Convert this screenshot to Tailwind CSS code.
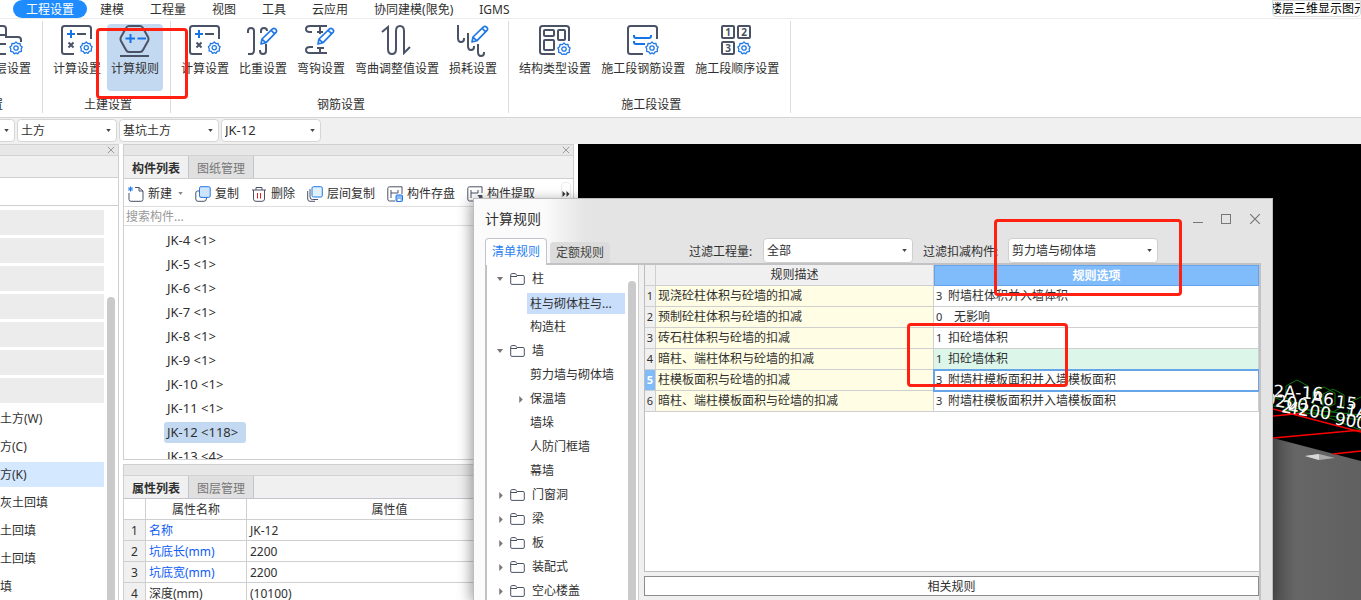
<!DOCTYPE html>
<html lang="zh-CN">
<head>
<meta charset="utf-8">
<title>计算规则</title>
<script src="https://cdn.jsdelivr.net/npm/@tailwindcss/browser@4"></script>
</head>
<body class="relative flex h-screen flex-col overflow-hidden bg-white font-['Noto_Sans','Noto_Sans_CJK_SC',sans-serif] text-xs text-[#303030]">

<!-- shared icon symbols -->
<svg class="hidden">
  <symbol id="gear" viewBox="0 0 14 14"><path d="M7 1 8.7 2.6 11 2.4 11.4 4.7 13.2 6 12.2 8 12.4 10.3 10.1 10.8 8.8 12.8 7 11.9 5.2 12.8 3.9 10.8 1.6 10.3 1.8 8 .8 6 2.6 4.7 3 2.4 5.3 2.6Z" fill="#fff" stroke="#1f78e6" stroke-width="1.3" stroke-linejoin="round"/><circle cx="7" cy="7" r="2.2" fill="none" stroke="#1f78e6" stroke-width="1.3"/></symbol>
  <symbol id="pencil" viewBox="0 0 18 18"><path d="M1 17 2 12 12.5 1.8Q14 .6 15.6 2.1 17.4 3.8 16 5.4L5.8 15.8ZM2 12 5.8 15.8M11 3.2 14.6 6.8" fill="#fff" stroke="#1f78e6" stroke-width="1.7" stroke-linejoin="round"/></symbol>
  <symbol id="calc" viewBox="0 0 32 30"><g fill="none" stroke="#4a5266" stroke-width="2"><path d="M13 29H3.500Q1 29 1 26.500V3.500Q1 1 3.500 1H27.500Q30 1 30 3.500V14"/><path d="M16 9H25"/><path d="M7.500 17.500 12.500 22.500M12.500 17.500 7.500 22.500"/></g><path d="M6 9H14M10 5V13" stroke="#1473e6" stroke-width="2"/><use href="#gear" x="18.500" y="16" width="13.500" height="13.500"/></symbol>
  <symbol id="folder" viewBox="0 0 15 12"><path d="M1 1.500Q1 .6 2 .6H5.500L6.800 2.500H13Q14.300 2.500 14.300 3.700V10.200Q14.300 11.400 13 11.400H2Q.7 11.400 .7 10.200V1.500M.7 3.500H7" fill="none" stroke="#4a5266"/></symbol>
  <symbol id="cross" viewBox="0 0 10 10"><path d="M1 1 9 9M9 1 1 9" fill="none" stroke="currentColor"/></symbol>
  <symbol id="down" viewBox="0 0 6 4"><path d="M0 0H6L3 4Z" fill="currentColor"/></symbol>
  <symbol id="right" viewBox="0 0 4 8"><path d="M0 0 4 4 0 8Z" fill="currentColor"/></symbol>
</svg>

<header class="relative shrink-0">
  <nav class="flex h-[19px] border-b border-[#ececec] leading-5 whitespace-nowrap">
    <a href="#" class="ml-[13px] rounded-full bg-[#1e8cff] px-[13px] text-white">工程设置</a>
    <a href="#" class="px-[13px]">建模</a>
    <a href="#" class="px-[13px]">工程量</a>
    <a href="#" class="px-[13px]">视图</a>
    <a href="#" class="px-[13px]">工具</a>
    <a href="#" class="px-[13px]">云应用</a>
    <a href="#" class="px-[13px]">协同建模(限免)</a>
    <a href="#" class="px-[13px]">IGMS</a>
    <button class="ml-auto flex h-[17px] w-[89px] justify-end overflow-hidden rounded-b border border-[#dcdcdc] bg-white leading-4 text-black"><span class="-mr-[6px]">楼层三维显示图元</span></button>
  </nav>

  <div class="flex h-[99px] border-b border-[#d4d4d4] pt-[2px] whitespace-nowrap">
    <section class="-ml-[82px] flex h-[92px] w-[125px] shrink-0 flex-col border-r border-[#dcdcdc] pr-[6px]">
      <div class="flex h-[76px] shrink-0 justify-end pt-[3px]">
        <button class="flex flex-col items-center gap-[6px] px-[5px]">
          <svg class="mt-px h-[30px] w-8" viewBox="0 0 32 30"><path d="M10 29H6Q3 29 3 26V4Q3 1 6 1H12Q15 1 15 4V12H27Q30 12 30 15V17M3 10H15M3 19H15M10 29H15" fill="none" stroke="#4a5266" stroke-width="2"/><use href="#gear" x="18" y="16" width="14" height="14"/></svg>
          <span class="leading-4">楼层设置</span></button>
      </div>
      <span class="pl-1 text-center leading-4">基本设置</span>
    </section>
    <section class="flex h-[92px] shrink-0 flex-col border-r border-[#dcdcdc] pr-[6px] pl-[5px]">
      <div class="flex h-[76px] shrink-0 items-start pt-[3px]">
        <button class="flex flex-col items-center gap-[6px] px-[5px]"><svg class="mt-px h-[30px] w-8"><use href="#calc"/></svg><span class="leading-4">计算设置</span></button>
        <button class="mx-px flex h-[67px] flex-col items-center gap-[6px] rounded bg-[#c2d9f1] px-1">
          <svg class="mt-px h-[32px] w-8" viewBox="0 0 32 32"><path d="M10 1H21Q23 1 24 3L29 12Q30 14 29 16L24 25Q23 27 21 27H10Q8 27 7 25L2 16Q1 14 2 12L7 3Q8 1 10 1ZM1 31H30" fill="none" stroke="#4a5266" stroke-width="2"/><path d="M6.500 13.500H16M11.500 9V18M18.500 13.500H27" stroke="#1473e6" stroke-width="2"/></svg>
          <span class="-mt-[2px] leading-4">计算规则</span></button>
      </div>
      <span class="pl-1 text-center leading-4">土建设置</span>
    </section>
    <section class="flex h-[92px] shrink-0 flex-col border-r border-[#dcdcdc] pr-[6px] pl-[5px]">
      <div class="flex h-[76px] shrink-0 items-start pt-[3px]">
        <button class="flex flex-col items-center gap-[6px] px-[5px]"><svg class="mt-px h-[30px] w-8"><use href="#calc"/></svg><span class="leading-4">计算设置</span></button>
        <button class="flex flex-col items-center gap-[6px] px-[5px]">
          <svg class="mt-px h-[30px] w-8" viewBox="0 0 32 30"><path d="M1 8V6Q1 3 4 3T7 6V25Q7 29 4 29H1M14 8V6Q14 3 17 3T20 6M13 25V26Q13 29 16 29T19 26V19" fill="none" stroke="#4a5266" stroke-width="2"/><use href="#pencil" x="13" y="2" width="18" height="18"/></svg>
          <span class="leading-4">比重设置</span></button>
        <button class="flex flex-col items-center gap-[6px] px-[5px]">
          <svg class="mt-px h-[30px] w-8" viewBox="0 0 32 30"><path d="M7 7H5Q1 7 1 4T5 1H22M15 1V9M12 7H18M8 22H5Q1 22 1 25T5 28H22M15 23V28M12 23H19" fill="none" stroke="#4a5266" stroke-width="2"/><use href="#pencil" x="12" y="2" width="18" height="18"/></svg>
          <span class="leading-4">弯钩设置</span></button>
        <button class="flex flex-col items-center gap-[6px] px-[5px]">
          <svg class="mt-px h-[30px] w-8" viewBox="0 0 32 30"><path d="M1 7 7 2V24Q7 29 11 29T15 24V6Q15 1 19 1T23 6V28L29 22" fill="none" stroke="#4a5266" stroke-width="2"/></svg>
          <span class="leading-4">弯曲调整值设置</span></button>
        <button class="flex flex-col items-center gap-[6px] px-[5px]">
          <svg class="mt-px h-[32px] w-8" viewBox="0 0 32 32"><path d="M1 0V13Q1 17 4 17T7 14V13M11 8V21Q11 25 14 25T17 22V21M21 19V27Q21 31 24 31T27 28V27" fill="none" stroke="#4a5266" stroke-width="2"/><use href="#pencil" x="14" y="0" width="18" height="18"/></svg>
          <span class="-mt-[2px] leading-4">损耗设置</span></button>
      </div>
      <span class="pl-1 text-center leading-4">钢筋设置</span>
    </section>
    <section class="flex h-[92px] shrink-0 flex-col border-r border-[#dcdcdc] pr-[6px] pl-[5px]">
      <div class="flex h-[76px] shrink-0 items-start pt-[3px]">
        <button class="flex flex-col items-center gap-[6px] px-[5px]">
          <svg class="mt-px h-[30px] w-8" viewBox="0 0 32 30"><g fill="none" stroke="#4a5266" stroke-width="2"><path d="M16 29H3.500Q1 29 1 26.500V3.500Q1 1 3.500 1H27.500Q30 1 30 3.500V16"/><rect x="5" y="5" width="10" height="6" rx="1"/><rect x="19" y="5" width="7" height="10" rx="1"/><rect x="5" y="15" width="10" height="10" rx="1"/></g><use href="#gear" x="18" y="17" width="14" height="14"/></svg>
          <span class="leading-4">结构类型设置</span></button>
        <button class="flex flex-col items-center gap-[6px] px-[5px]">
          <svg class="mt-px h-[30px] w-8" viewBox="0 0 32 30"><path d="M16 29H3.500Q1 29 1 26.500V3.500Q1 1 3.500 1H27.500Q30 1 30 3.500V14" fill="none" stroke="#4a5266" stroke-width="2"/><path d="M7 10V11Q7 13 9 13H22Q24 13 24 11V10M7 16V17Q7 19 9 19H18" fill="none" stroke="#1473e6" stroke-width="2"/><use href="#gear" x="18" y="16" width="14" height="14"/></svg>
          <span class="leading-4">施工段钢筋设置</span></button>
        <button class="flex flex-col items-center gap-[6px] px-[5px]">
          <svg class="mt-px h-[30px] w-8" viewBox="0 0 32 30"><g fill="none" stroke="#4a5266" stroke-width="2"><rect x="1" y="1" width="12" height="12" rx="1"/><rect x="17" y="1" width="12" height="12" rx="1"/><rect x="1" y="17" width="12" height="12" rx="1"/></g><g fill="#4a5266" font-family="Noto Sans" font-size="10" font-weight="700" text-anchor="middle"><text x="7" y="11">1</text><text x="23" y="11">2</text><text x="7" y="27">3</text></g><use href="#gear" x="16" y="16" width="14" height="14"/></svg>
          <span class="leading-4">施工段顺序设置</span></button>
      </div>
      <span class="pl-1 text-center leading-4">施工段设置</span>
    </section>
  </div>

  <div class="flex h-[26px] gap-[2px] bg-[#f0f0f0] pt-px">
    <label class="relative -ml-[85px] block h-[23px]"><select aria-label="楼层" class="h-full w-[100px] appearance-none rounded border border-[#d6d6d6] bg-white px-[3px]"><option></option></select><svg class="absolute top-[10px] right-[6px] h-[3px] w-[5px] text-[#444]"><use href="#down"/></svg></label>
    <label class="relative block h-[23px]"><select aria-label="构件大类" class="h-full w-[100px] appearance-none rounded border border-[#d6d6d6] bg-white px-[3px]"><option>土方</option></select><svg class="absolute top-[10px] right-[6px] h-[3px] w-[5px] text-[#444]"><use href="#down"/></svg></label>
    <label class="relative block h-[23px]"><select aria-label="构件类型" class="h-full w-[100px] appearance-none rounded border border-[#d6d6d6] bg-white px-[3px]"><option>基坑土方</option></select><svg class="absolute top-[10px] right-[6px] h-[3px] w-[5px] text-[#444]"><use href="#down"/></svg></label>
    <label class="relative block h-[23px]"><select aria-label="构件" class="h-full w-[100px] appearance-none rounded border border-[#d6d6d6] bg-white px-[3px] text-[13px]"><option>JK-12</option></select><svg class="absolute top-[10px] right-[6px] h-[3px] w-[5px] text-[#444]"><use href="#down"/></svg></label>
  </div>
</header>

<main class="flex min-h-0 flex-1 bg-white">
  <!-- navigation column -->
  <aside class="flex w-[119px] shrink-0 flex-col overflow-hidden border-r border-[#cfcfcf]">
    <div class="flex h-3 shrink-0 items-center justify-end border-y border-[#d2d2d2] bg-[#e7e7e7] pr-[3px]"><button aria-label="关闭" class="text-[#888]"><svg class="block h-2 w-2"><use href="#cross"/></svg></button></div>
    <div class="h-[22px] shrink-0 border-b border-[#cfcfcf] bg-[#f0f0f0]"></div>
    <div class="h-7 shrink-0 border-b border-[#cfcfcf]"></div>
    <div class="flex min-h-0 flex-1 justify-between">
      <ul class="flex w-[104px] flex-col gap-[3px] pt-1 leading-[26px] whitespace-nowrap">
        <li class="h-[25px] shrink-0 bg-[#ececec]"></li>
        <li class="h-[25px] shrink-0 bg-[#ececec]"></li>
        <li class="h-[25px] shrink-0 bg-[#ececec]"></li>
        <li class="h-[25px] shrink-0 bg-[#ececec]"></li>
        <li class="h-[25px] shrink-0 bg-[#ececec]"></li>
        <li class="h-[25px] shrink-0 bg-[#ececec]"></li>
        <li class="h-[25px] shrink-0 bg-[#ececec]"></li>
        <li class="h-[25px] shrink-0">土方(W)</li>
        <li class="h-[25px] shrink-0">方(C)</li>
        <li class="h-[25px] shrink-0 bg-[#d4e8ff]">方(K)</li>
        <li class="h-[25px] shrink-0">灰土回填</li>
        <li class="h-[25px] shrink-0">土回填</li>
        <li class="h-[25px] shrink-0">土回填</li>
        <li class="h-[25px] shrink-0">填</li>
      </ul>
      <div class="mt-[91px] mr-[3px] w-2 rounded-t-full bg-[#cacaca]"></div>
    </div>
  </aside>

  <!-- component list and properties -->
  <div class="ml-1 flex w-[451px] shrink-0 flex-col gap-1">
    <section class="flex h-[316px] shrink-0 flex-col overflow-hidden border border-[#cfcfcf] whitespace-nowrap">
      <div class="flex h-[11px] shrink-0 items-center justify-end border-b border-[#d2d2d2] bg-[#e7e7e7] pr-[3px]"><button aria-label="关闭" class="text-[#888]"><svg class="block h-2 w-2"><use href="#cross"/></svg></button></div>
      <div class="flex h-[23px] shrink-0 border-b border-[#cfcfcf] bg-[#f0f0f0] leading-[22px]">
        <button class="w-[65px] border-r border-[#c4c4cc] pt-[2px] font-bold">构件列表</button>
        <button class="w-[65px] border-r border-[#c4c4cc] bg-[#e0e0e0] pt-[2px] text-[#777]">图纸管理</button>
      </div>
      <div class="flex h-7 shrink-0 items-center gap-3 border-b border-[#dedede] pt-[2px] pl-1">
        <button class="flex items-center gap-1"><svg class="h-4 w-4" viewBox="0 0 16 16"><path d="M1 7V13.500Q1 15.300 3 15.300H13Q15 15.300 15 13.500V5L11 1.500H7M11 1.500V5H15" fill="none" stroke="#4a5266"/><path d="M0 3H5M2.500 .5V5.500M.7 1.200 4.300 4.800M4.300 1.200 .7 4.800" stroke="#1f78e6"/></svg>新建<svg class="ml-[2px] h-[3px] w-[5px] text-[#888]"><use href="#down"/></svg></button>
        <button class="flex items-center gap-1"><svg class="h-4 w-4" viewBox="0 0 16 16"><path d="M4 5H2.500Q.8 5 .8 7V13Q.8 15.300 3 15.300H9Q11.500 15.300 11.500 12" fill="none" stroke="#4a5266"/><rect x="4.500" y=".7" width="10.700" height="10.700" rx="1.500" fill="#cfe3fb" stroke="#1f78e6"/></svg>复制</button>
        <button class="flex items-center gap-1"><svg class="h-4 w-4" viewBox="0 0 16 16"><path d="M1 4H15M5 4V1.500H11V4M2.500 4V13Q2.500 15.300 5 15.300H11Q13.500 15.300 13.500 13V4" fill="none" stroke="#4a5266"/><path d="M6.500 7V12.500M9.500 7V12.500" stroke="#e02020"/></svg>删除</button>
        <button class="flex items-center gap-1"><svg class="h-4 w-4" viewBox="0 0 16 16"><path d="M.7 5V13Q.7 15.300 3 15.300H8M3 3V11Q3 13.500 5.500 13.500H11" fill="none" stroke="#4a5266"/><rect x="5" y=".7" width="10.300" height="10.300" rx="1.500" fill="#e2effd" stroke="#1f78e6"/></svg>层间复制</button>
        <button class="flex items-center gap-1"><svg class="h-4 w-4" viewBox="0 0 16 16"><path d="M8 15H2.500Q.8 15 .8 13V2.500Q.8 .8 2.500 .8H15V8M4 12V4M4 7H11M11 4V7" fill="none" stroke="#4a5266"/><rect x="9" y="9" width="6.500" height="6.500" rx="1" fill="#8dbcf5" stroke="#1f78e6"/><path d="M11 15V13H13.500V15" fill="#fff"/></svg>构件存盘</button>
        <button class="flex items-center gap-1"><svg class="h-4 w-4" viewBox="0 0 16 16"><path d="M8 15H2.500Q.8 15 .8 13V2.500Q.8 .8 2.500 .8H15V7M4 12V4M4 7H11M11 4V7" fill="none" stroke="#4a5266"/><path d="M9 15 14 10M11 9.500H15V13.500Z" fill="#4a5266" stroke="#4a5266"/></svg>构件提取</button>
        <button aria-label="更多" class="mr-[2px] ml-auto flex h-6 w-[10px] items-center justify-center rounded border border-[#ececec] text-[#333]"><svg class="h-[6px] w-[4px] shrink-0"><use href="#right"/></svg><svg class="h-[6px] w-[4px] shrink-0"><use href="#right"/></svg></button>
      </div>
      <input aria-label="搜索构件" placeholder="搜索构件..." class="h-[19px] shrink-0 border-b border-[#dedede] px-[2px] placeholder:text-[#999]">
      <ul class="pt-1 pl-10 text-[13px] leading-[21px]">
        <li class="h-6"><span class="px-[3px]">JK-4 &lt;1&gt;</span></li>
        <li class="h-6"><span class="px-[3px]">JK-5 &lt;1&gt;</span></li>
        <li class="h-6"><span class="px-[3px]">JK-6 &lt;1&gt;</span></li>
        <li class="h-6"><span class="px-[3px]">JK-7 &lt;1&gt;</span></li>
        <li class="h-6"><span class="px-[3px]">JK-8 &lt;1&gt;</span></li>
        <li class="h-6"><span class="px-[3px]">JK-9 &lt;1&gt;</span></li>
        <li class="h-6"><span class="px-[3px]">JK-10 &lt;1&gt;</span></li>
        <li class="h-6"><span class="px-[3px]">JK-11 &lt;1&gt;</span></li>
        <li class="h-6"><span class="inline-block h-[21px] rounded-[3px] bg-[#c2d9f1] pr-2 pl-[3px]">JK-12 &lt;118&gt;</span></li>
        <li class="h-6"><span class="px-[3px]">JK-13 &lt;4&gt;</span></li>
      </ul>
    </section>
    <section class="flex min-h-0 flex-1 flex-col overflow-hidden border border-b-0 border-[#cfcfcf]">
      <div class="h-[11px] shrink-0 border-b border-[#d2d2d2] bg-[#e7e7e7]"></div>
      <div class="flex h-[23px] shrink-0 border-b border-[#c4c4cc] bg-[#f0f0f0] leading-[22px]">
        <button class="w-[65px] border-r border-[#c4c4cc] pt-[2px] font-bold">属性列表</button>
        <button class="w-[65px] border-r border-[#c4c4cc] bg-[#e0e0e0] pt-[2px] text-[#777]">图层管理</button>
      </div>
      <table class="w-full table-fixed border-separate border-spacing-0 leading-[18px] [&_td]:h-[21px] [&_td]:border-r [&_td]:border-b [&_td]:border-[#cfcfcf] [&_td]:px-[3px] [&_td]:pt-[2px] [&_td]:pb-0 [&_th]:h-[21px] [&_th]:border-r [&_th]:border-b [&_th]:border-[#cfcfcf] [&_th]:p-0 [&_th]:pt-[2px] [&_th]:font-normal">
        <colgroup><col class="w-[22px]"><col class="w-[101px]"><col></colgroup>
        <thead><tr><th></th><th>属性名称</th><th class="pr-[40px]!">属性值</th></tr></thead>
        <tbody>
          <tr><th class="bg-[#f0f0f0]">1</th><td class="text-[#0f5cf5]">名称</td><td>JK-12</td></tr>
          <tr><th class="bg-[#f0f0f0]">2</th><td class="text-[#0f5cf5]">坑底长(mm)</td><td>2200</td></tr>
          <tr><th class="bg-[#f0f0f0]">3</th><td class="text-[#0f5cf5]">坑底宽(mm)</td><td>2200</td></tr>
          <tr><th class="bg-[#f0f0f0]">4</th><td>深度(mm)</td><td>(10100)</td></tr>
        </tbody>
      </table>
    </section>
  </div>

  <!-- 3D viewport -->
  <div class="relative ml-1 min-w-0 flex-1 overflow-hidden bg-black">
    <svg class="absolute top-[226px] right-0 h-[230px] w-[88px]" viewBox="0 0 88 230">
      <defs><linearGradient id="ground"><stop offset="0" stop-color="#4c4c4c"/><stop offset=".25" stop-color="#666"/><stop offset="1" stop-color="#606060"/></linearGradient></defs>
      <path d="M0 68 88 91V230H0Z" fill="url(#ground)"/>
      <path d="M0 39 88 62M0 46 32 43M0 68 88 60M60 84 88 81" fill="none" stroke="#f00" stroke-width="1.500"/>
      <g fill="none" stroke="#0a7a0a"><path d="M13 16 24 10 35 16V28L24 34 13 28ZM40 22 51 17 62 23V34L51 39 40 34ZM50 24 60 19 71 25V36L60 42 50 36ZM77 32 88 27M0 27 88 60M0 36 88 45M10 40 88 50M74 46 78 34"/></g>
      <g fill="#fff" font-family="DejaVu Sans" font-size="17"><text transform="rotate(3 0 27)" x="0" y="27">2A-16</text><text transform="rotate(7 38 33)" x="38" y="33">A6</text><text transform="rotate(7 60 36)" x="62" y="37">15</text><text transform="rotate(10 70 45)" x="72" y="45">1A</text><text transform="rotate(9 0 36)" x="-9" y="36">0200</text><text transform="rotate(9 8 42)" x="8" y="42">2</text><text transform="rotate(9 14 44)" x="14" y="43">4200</text><text transform="rotate(9 60 54)" x="61" y="54">900</text></g>
      <path d="M32 86 46 84 62 88 46 90Z" fill="#aaa"/><path d="M32 86 46 84V90Z" fill="#d8d8d8"/>
    </svg>
  </div>
</main>

<!-- rule dialog floating above the workspace -->
<section role="dialog" aria-label="计算规则" class="absolute top-[198px] bottom-0 left-[473px] flex w-[800px] flex-col overflow-hidden border border-b-0 border-[#bdbdbd] bg-[linear-gradient(to_right,#fbfbfb_0,#fbfbfb_70px,#e4e4e4_112px)] pr-[11px] pl-[11px] shadow-[-3px_2px_12px_rgba(0,0,0,0.35)]">
  <div class="flex h-[39px] shrink-0 items-center text-sm"><h1>计算规则</h1>
    <div class="ml-auto flex items-center gap-[18px] text-[#777]">
      <button aria-label="最小化"><svg class="block h-[10px] w-[10px]" viewBox="0 0 10 10"><path d="M0 8.500H10" stroke="currentColor"/></svg></button>
      <button aria-label="最大化"><svg class="block h-[10px] w-[10px]" viewBox="0 0 10 10"><rect x=".5" y=".5" width="9" height="9" fill="none" stroke="currentColor"/></svg></button>
      <button aria-label="关闭"><svg class="block h-3 w-3"><use href="#cross"/></svg></button>
    </div>
  </div>
  <div class="flex h-[25px] shrink-0 whitespace-nowrap">
    <button class="z-10 -mb-[2px] h-[27px] w-[62px] rounded-t border border-b-0 border-[#c2c2ca] bg-white text-[#1f80f0]">清单规则</button>
    <button class="mt-1 ml-[3px] w-[60px] rounded-t bg-[#dcdcdc] text-[#444]">定额规则</button>
    <label for="quantity" class="ml-[79px] w-[74px] leading-[27px]">过滤工程量:</label>
    <div class="relative"><select id="quantity" class="h-[25px] w-[150px] appearance-none rounded border border-[#cfcfcf] bg-white px-[3px] pt-px"><option>全部</option></select><svg class="absolute top-[11px] right-[6px] h-[3px] w-[5px] text-[#444]"><use href="#down"/></svg></div>
    <label for="component" class="ml-[10px] w-[85px] leading-[27px]">过滤扣减构件:</label>
    <div class="relative"><select id="component" class="h-[25px] w-[150px] appearance-none rounded border border-[#cfcfcf] bg-white px-[3px] pt-px"><option>剪力墙与砌体墙</option></select><svg class="absolute top-[11px] right-[6px] h-[3px] w-[5px] text-[#444]"><use href="#down"/></svg></div>
  </div>
  <div class="flex min-h-0 flex-1 border-2 border-b-0 border-[#c2c2c6] bg-[#f0f0f0]">
    <div class="flex w-[152px] shrink-0 justify-between overflow-hidden border-r border-[#cfcfcf] bg-white">
      <ul class="w-[138px] pt-[2px] leading-6 whitespace-nowrap text-[#303030] [&>li]:flex [&>li]:h-6 [&>li]:items-center">
        <li class="gap-[7px] pl-[10px]"><svg class="h-1 w-[6px] text-[#777]"><use href="#down"/></svg><svg class="h-3 w-[15px]"><use href="#folder"/></svg>柱</li>
        <li class="pl-10"><span class="h-[21px] w-[98px] bg-[#c8defa] px-[3px] leading-[22px]">柱与砌体柱与...</span></li>
        <li class="pl-[43px]">构造柱</li>
        <li class="gap-[7px] pl-[10px]"><svg class="h-1 w-[6px] text-[#777]"><use href="#down"/></svg><svg class="h-3 w-[15px]"><use href="#folder"/></svg>墙</li>
        <li class="pl-[43px]">剪力墙与砌体墙</li>
        <li class="gap-[7px] pl-8"><svg class="h-[7px] w-1 text-[#777]"><use href="#right"/></svg>保温墙</li>
        <li class="pl-[43px]">墙垛</li>
        <li class="pl-[43px]">人防门框墙</li>
        <li class="pl-[43px]">幕墙</li>
        <li class="gap-[7px] pl-3"><svg class="h-[7px] w-1 text-[#777]"><use href="#right"/></svg><svg class="h-3 w-[15px]"><use href="#folder"/></svg>门窗洞</li>
        <li class="gap-[7px] pl-3"><svg class="h-[7px] w-1 text-[#777]"><use href="#right"/></svg><svg class="h-3 w-[15px]"><use href="#folder"/></svg>梁</li>
        <li class="gap-[7px] pl-3"><svg class="h-[7px] w-1 text-[#777]"><use href="#right"/></svg><svg class="h-3 w-[15px]"><use href="#folder"/></svg>板</li>
        <li class="gap-[7px] pl-3"><svg class="h-[7px] w-1 text-[#777]"><use href="#right"/></svg><svg class="h-3 w-[15px]"><use href="#folder"/></svg>装配式</li>
        <li class="gap-[7px] pl-3"><svg class="h-[7px] w-1 text-[#777]"><use href="#right"/></svg><svg class="h-3 w-[15px]"><use href="#folder"/></svg>空心楼盖</li>
      </ul>
      <div class="mt-4 mr-[2px] w-2 rounded-t-full bg-[#cacaca]"></div>
    </div>
    <div class="ml-[5px] flex min-w-0 flex-1 flex-col">
      <div class="min-h-0 flex-1 overflow-hidden border-b border-l border-[#bdbdbd] bg-white">
        <table class="w-full table-fixed border-separate border-spacing-0 leading-5 whitespace-nowrap [&_b]:inline-block [&_b]:w-3 [&_b]:text-[11px] [&_b]:leading-none [&_b]:font-normal [&_td]:h-[21px] [&_td]:border-r [&_td]:border-b [&_td]:border-[#cfcfcf] [&_td]:px-[2px] [&_td]:py-0 [&_th]:h-[21px] [&_th]:border-r [&_th]:border-b [&_th]:border-[#cfcfcf] [&_th]:p-0">
          <colgroup><col class="w-[11px]"><col class="w-[278px]"><col></colgroup>
          <thead><tr><th class="bg-[#f0f0f0]"></th><th class="bg-[#f0f0f0] font-normal">规则描述</th><th class="border-t border-l border-[#62a3ea]! bg-[#80bbfb] leading-[19px] text-white">规则选项</th></tr></thead>
          <tbody>
            <tr><th class="bg-[#f0f0f0] text-[11px] font-normal">1</th><td class="bg-[#fffde3]">现浇砼柱体积与砼墙的扣减</td><td><b>3</b>附墙柱体积并入墙体积</td></tr>
            <tr><th class="bg-[#f0f0f0] text-[11px] font-normal">2</th><td class="bg-[#fffde3]">预制砼柱体积与砼墙的扣减</td><td><b class="mr-[6px]">0</b>无影响</td></tr>
            <tr><th class="bg-[#f0f0f0] text-[11px] font-normal">3</th><td class="bg-[#fffde3]">砖石柱体积与砼墙的扣减</td><td><b>1</b>扣砼墙体积</td></tr>
            <tr><th class="bg-[#f0f0f0] text-[11px] font-normal">4</th><td class="bg-[#fffde3]">暗柱、端柱体积与砼墙的扣减</td><td class="bg-[#dcf6ea]"><b>1</b>扣砼墙体积</td></tr>
            <tr><th class="bg-[#80bbfb] text-[11px] text-white">5</th><td class="bg-[#fffde3]">柱模板面积与砼墙的扣减</td><td class="outline-2 -outline-offset-1 outline-[#66a5e8]"><b>3</b>附墙柱模板面积并入墙模板面积</td></tr>
            <tr><th class="bg-[#f0f0f0] text-[11px] font-normal">6</th><td class="bg-[#fffde3]">暗柱、端柱模板面积与砼墙的扣减</td><td><b>3</b>附墙柱模板面积并入墙模板面积</td></tr>
          </tbody>
        </table>
      </div>
      <div class="mt-1 mb-1 h-5 shrink-0 border border-[#8c8c8c] bg-white text-center leading-5">相关规则</div>
    </div>
  </div>
</section>

<!-- red callouts marking the steps -->
<div class="pointer-events-none absolute top-[28px] left-[96px] h-[71px] w-[92px] rounded border-3 border-[#ff2012]"></div>
<div class="pointer-events-none absolute top-[219px] left-[994px] h-[77px] w-[188px] rounded border-3 border-[#ff2012]"></div>
<div class="pointer-events-none absolute top-[323px] left-[907px] h-[64px] w-[161px] rounded border-3 border-[#ff2012]"></div>
</body>
</html>
